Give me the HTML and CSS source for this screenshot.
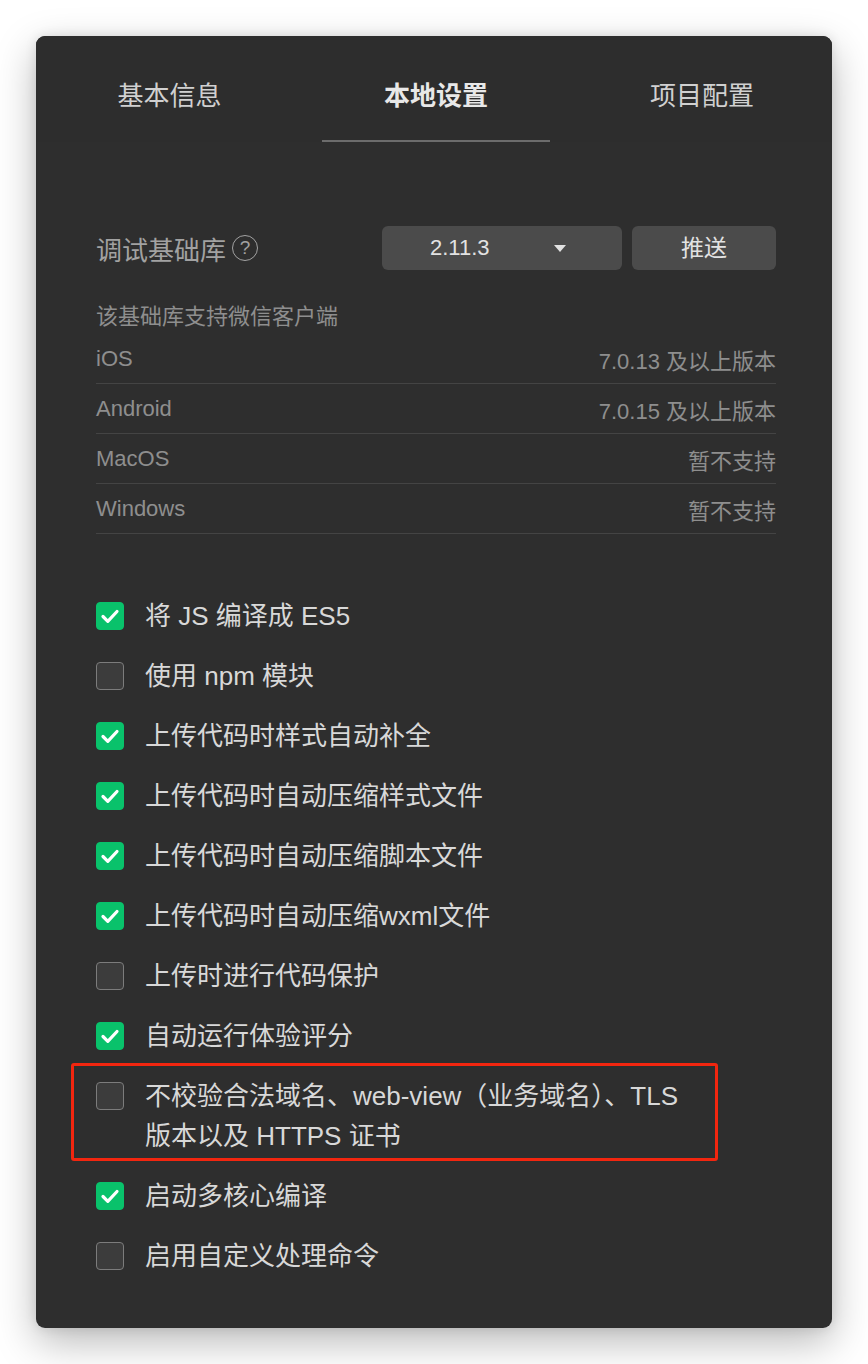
FILE: index.html
```html
<!DOCTYPE html>
<html lang="zh-CN">
<head>
<meta charset="utf-8">
<title>本地设置</title>
<link rel="stylesheet" href="styles.css">
</head>
<body>
<div class="panel">
  <div class="tabs">
    <div class="tab">基本信息</div>
    <div class="tab active">本地设置</div>
    <div class="tab">项目配置</div>
  </div>
  <div class="content">
    <div class="lib-row">
      <div class="lib-label">调试基础库<span class="help">?</span></div>
      <div class="lib-controls">
        <div class="select"><span>2.11.3</span><span class="caret"></span></div>
        <div class="btn">推送</div>
      </div>
    </div>
    <div class="support-title">该基础库支持微信客户端</div>
    <div class="support-list">
      <div class="support-row"><span>iOS</span><span>7.0.13 及以上版本</span></div>
      <div class="support-row"><span>Android</span><span>7.0.15 及以上版本</span></div>
      <div class="support-row"><span>MacOS</span><span>暂不支持</span></div>
      <div class="support-row"><span>Windows</span><span>暂不支持</span></div>
    </div>
    <ul class="options">
      <li class="option"><span class="cb checked"><svg viewBox="0 0 28 28"><path d="M7 14.5l4.8 4.8L21 9.5"/></svg></span><span class="opt-text">将 JS 编译成 ES5</span></li>
      <li class="option"><span class="cb"></span><span class="opt-text">使用 npm 模块</span></li>
      <li class="option"><span class="cb checked"><svg viewBox="0 0 28 28"><path d="M7 14.5l4.8 4.8L21 9.5"/></svg></span><span class="opt-text">上传代码时样式自动补全</span></li>
      <li class="option"><span class="cb checked"><svg viewBox="0 0 28 28"><path d="M7 14.5l4.8 4.8L21 9.5"/></svg></span><span class="opt-text">上传代码时自动压缩样式文件</span></li>
      <li class="option"><span class="cb checked"><svg viewBox="0 0 28 28"><path d="M7 14.5l4.8 4.8L21 9.5"/></svg></span><span class="opt-text">上传代码时自动压缩脚本文件</span></li>
      <li class="option"><span class="cb checked"><svg viewBox="0 0 28 28"><path d="M7 14.5l4.8 4.8L21 9.5"/></svg></span><span class="opt-text">上传代码时自动压缩wxml文件</span></li>
      <li class="option"><span class="cb"></span><span class="opt-text">上传时进行代码保护</span></li>
      <li class="option"><span class="cb checked"><svg viewBox="0 0 28 28"><path d="M7 14.5l4.8 4.8L21 9.5"/></svg></span><span class="opt-text">自动运行体验评分</span></li>
      <li class="option highlighted"><span class="cb"></span><span class="opt-text">不校验合法域名、web-view（业务域名）、TLS<br>版本以及 HTTPS 证书</span><span class="mark"></span></li>
      <li class="option"><span class="cb checked"><svg viewBox="0 0 28 28"><path d="M7 14.5l4.8 4.8L21 9.5"/></svg></span><span class="opt-text">启动多核心编译</span></li>
      <li class="option"><span class="cb"></span><span class="opt-text">启用自定义处理命令</span></li>
    </ul>
  </div>
</div>
</body>
</html>
```

FILE: styles.css
```css
* { box-sizing: border-box; }
html, body {
  margin: 0;
  padding: 0;
  background: #ffffff;
}
body {
  font-family: "Liberation Sans", "Noto Sans CJK SC", sans-serif;
  padding: 36px;
}
.panel {
  width: 796px;
  height: 1292px;
  background: #2e2e2e;
  border-radius: 9px;
  box-shadow: 0 14px 40px rgba(0, 0, 0, 0.28), 0 0 12px rgba(0, 0, 0, 0.10);
}
.tabs {
  display: flex;
  height: 106px;
  background: #2d2d2d;
  border-radius: 9px 9px 0 0;
}
.tab {
  flex: 0 0 266px;
  position: relative;
  text-align: center;
  padding-top: 42px;
  font-size: 26px;
  line-height: 36px;
  color: #d0d0d0;
}
.tab:first-child {
  flex-basis: 267px;
}
.tab.active {
  color: #e8e8e8;
  font-weight: 700;
}
.tab.active::after {
  content: "";
  position: absolute;
  left: 50%;
  bottom: 0;
  width: 228px;
  height: 2px;
  margin-left: -114px;
  background: #6c6c6c;
}
.content {
  padding: 84px 56px 0 60px;
}
.lib-row {
  display: flex;
  justify-content: space-between;
  align-items: center;
  height: 44px;
}
.lib-label {
  display: flex;
  align-items: center;
  font-size: 26px;
  color: #a2a2a2;
}
.help {
  width: 26px;
  height: 26px;
  margin-left: 6px;
  border: 1.5px solid #a2a2a2;
  border-radius: 50%;
  font-size: 19px;
  line-height: 23px;
  text-align: center;
  color: #a2a2a2;
}
.lib-controls {
  display: flex;
  gap: 10px;
}
.select {
  width: 240px;
  height: 44px;
  display: flex;
  align-items: center;
  justify-content: space-between;
  padding: 0 56px 0 48px;
  background: #4b4b4b;
  border-radius: 6px;
  font-size: 22px;
  color: #e2e2e2;
}
.caret {
  width: 0;
  height: 0;
  border-left: 6px solid transparent;
  border-right: 6px solid transparent;
  border-top: 7px solid #e2e2e2;
}
.btn {
  width: 144px;
  height: 44px;
  line-height: 44px;
  text-align: center;
  background: #4b4b4b;
  border-radius: 6px;
  font-size: 23px;
  color: #e2e2e2;
}
.support-title {
  margin-top: 30px;
  height: 34px;
  line-height: 34px;
  font-size: 22px;
  color: #8e8e8e;
}
.support-row {
  display: flex;
  justify-content: space-between;
  align-items: center;
  height: 50px;
  border-bottom: 1px solid #444444;
  font-size: 22px;
  color: #8e8e8e;
}
.options {
  list-style: none;
  margin: 52px 0 0 0;
  padding: 0;
}
.option {
  position: relative;
  display: flex;
  align-items: flex-start;
  gap: 21px;
  padding: 10px 0;
  font-size: 26px;
  line-height: 40px;
  color: #d8d8d8;
}
.opt-text {
  flex: 1;
}
.cb {
  flex: none;
  width: 28px;
  height: 28px;
  margin-top: 6px;
  border-radius: 4px;
  background: #3c3c3c;
  border: 1.5px solid #7c7c7c;
}
.cb.checked {
  background: #09c26b;
  border-color: #09c26b;
  display: flex;
  align-items: center;
  justify-content: center;
}
.cb svg {
  width: 28px;
  height: 28px;
  flex: none;
  fill: none;
  stroke: #ffffff;
  stroke-width: 3.2;
  stroke-linecap: round;
  stroke-linejoin: round;
}
.mark {
  position: absolute;
  left: -25px;
  top: -3px;
  width: 647px;
  height: 98px;
  border: 3px solid #f2260f;
  border-radius: 3px;
  pointer-events: none;
}
```
